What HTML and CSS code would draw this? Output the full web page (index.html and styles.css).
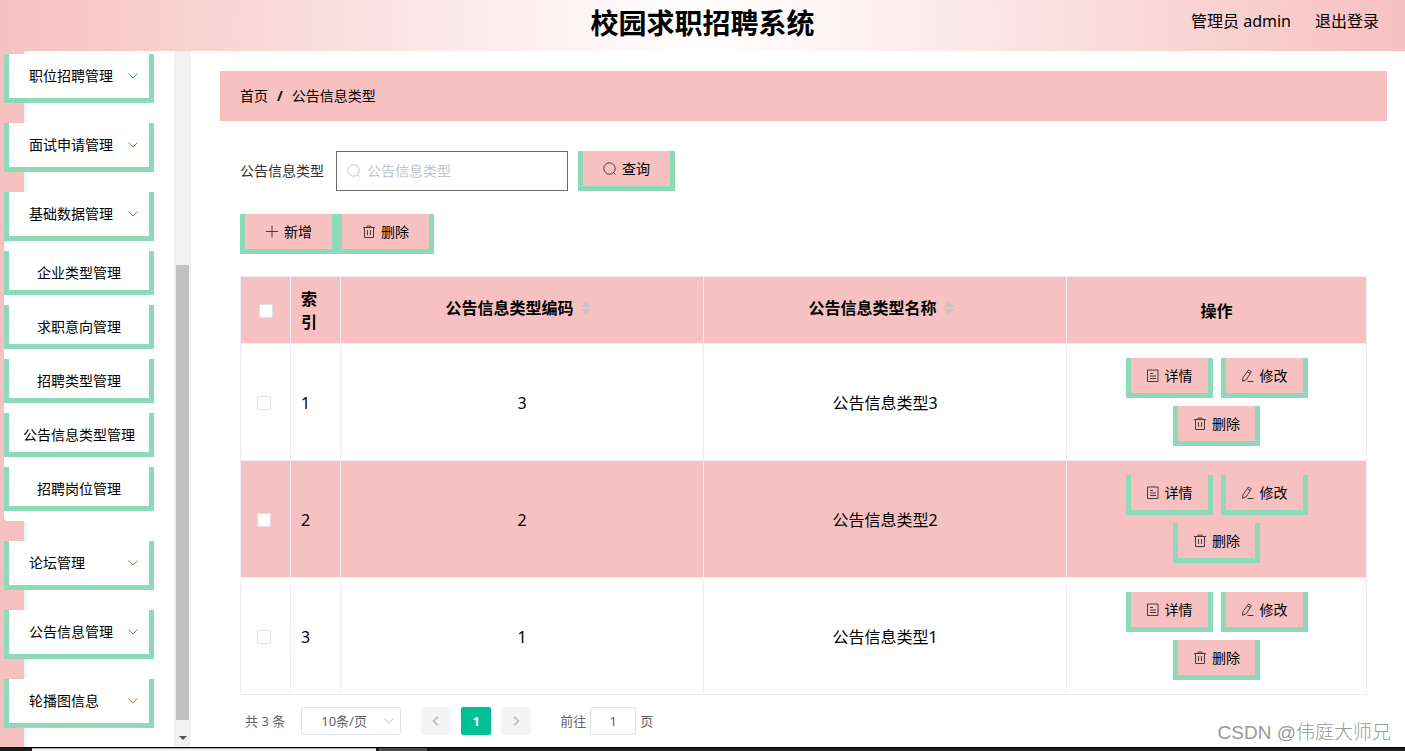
FILE: index.html
```html
<!DOCTYPE html>
<html lang="zh-CN">
<head>
<meta charset="utf-8">
<title>校园求职招聘系统</title>
<link rel="stylesheet" href="styles.css">
</head>
<body>
<svg class="sprite" aria-hidden="true">
  <symbol id="down" viewBox="0 0 12 12"><path d="M1.5 3.5 6 8l4.500-4.500"/></symbol>
  <symbol id="left" viewBox="0 0 12 12"><path d="M8 1.500 3.500 6 8 10.500"/></symbol>
  <symbol id="right" viewBox="0 0 12 12"><path d="M4 1.500 8.500 6 4 10.500"/></symbol>
  <symbol id="search" viewBox="0 0 14 14"><circle cx="6.500" cy="6.500" r="5.700"/><path d="m10.500 10.700 2 1.800"/></symbol>
  <symbol id="plus" viewBox="0 0 14 14"><path d="M1 6.500h12M7 .500v12"/></symbol>
  <symbol id="trash" viewBox="0 0 14 14"><path d="M1 2.500h12M5 2.500v-1.500h4v1.500M2.500 2.500v10h9v-10M5.500 5v5M8.500 5v5"/></symbol>
  <symbol id="doc" viewBox="0 0 14 14"><path d="M1.500 1h10.500v11.500h-10.500zM4 4.500h3M4 7h6M4 9.500h6"/></symbol>
  <symbol id="edit" viewBox="0 0 14 14"><path d="M7.500 1 10.300 2.800 5.200 10.800 1.500 12.300l.500-3.700zM6.500 2.800l2.700 1.700M6.500 12.500h6"/></symbol>
</svg>
<div class="app">
  <header class="header">
    <h1>校园求职招聘系统</h1>
    <div class="user"><span>管理员 admin</span><a href="#">退出登录</a></div>
  </header>
  <div class="body">
    <aside class="aside">
      <nav class="menu">
        <button class="item">职位招聘管理<svg><use href="#down"/></svg></button>
        <button class="item alt">面试申请管理<svg><use href="#down"/></svg></button>
        <div class="group">
          <button class="item">基础数据管理<svg><use href="#down"/></svg></button>
          <div class="submenu">
            <a href="#">企业类型管理</a>
            <a href="#">求职意向管理</a>
            <a href="#">招聘类型管理</a>
            <a href="#">公告信息类型管理</a>
            <a href="#">招聘岗位管理</a>
          </div>
        </div>
        <button class="item alt">论坛管理<svg><use href="#down"/></svg></button>
        <button class="item">公告信息管理<svg><use href="#down"/></svg></button>
        <button class="item alt">轮播图信息<svg><use href="#down"/></svg></button>
      </nav>
      <div class="scrollbar"><div class="thumb"></div><div class="arrow"></div></div>
    </aside>
    <main class="main">
      <div class="crumbs"><a href="#">首页</a><b>/</b><span>公告信息类型</span></div>
      <div class="content">
        <form class="search">
          <label for="type">公告信息类型</label>
          <div class="field"><svg><use href="#search"/></svg><input id="type" type="text" placeholder="公告信息类型"></div>
          <button class="btn wide" type="button"><svg><use href="#search"/></svg>查询</button>
        </form>
        <div class="tools">
          <button class="btn wide"><svg><use href="#plus"/></svg>新增</button>
          <button class="btn wide"><svg><use href="#trash"/></svg>删除</button>
        </div>
        <table class="table">
          <colgroup><col class="narrow"><col class="narrow"><col><col><col class="ops-col"></colgroup>
          <thead>
            <tr>
              <th class="check"><input type="checkbox" aria-label="全选"></th>
              <th class="index">索引</th>
              <th><div class="sortable">公告信息类型编码<i class="sort"></i></div></th>
              <th><div class="sortable">公告信息类型名称<i class="sort"></i></div></th>
              <th>操作</th>
            </tr>
          </thead>
          <tbody>
            <tr>
              <td class="check"><input type="checkbox" aria-label="选择 1"></td><td class="index">1</td><td>3</td><td>公告信息类型3</td>
              <td class="actions"><div class="ops"><button class="btn"><svg><use href="#doc"/></svg>详情</button><button class="btn"><svg><use href="#edit"/></svg>修改</button><button class="btn"><svg><use href="#trash"/></svg>删除</button></div></td>
            </tr>
            <tr class="striped">
              <td class="check"><input type="checkbox" aria-label="选择 2"></td><td class="index">2</td><td>2</td><td>公告信息类型2</td>
              <td class="actions"><div class="ops"><button class="btn"><svg><use href="#doc"/></svg>详情</button><button class="btn"><svg><use href="#edit"/></svg>修改</button><button class="btn"><svg><use href="#trash"/></svg>删除</button></div></td>
            </tr>
            <tr>
              <td class="check"><input type="checkbox" aria-label="选择 3"></td><td class="index">3</td><td>1</td><td>公告信息类型1</td>
              <td class="actions"><div class="ops"><button class="btn"><svg><use href="#doc"/></svg>详情</button><button class="btn"><svg><use href="#edit"/></svg>修改</button><button class="btn"><svg><use href="#trash"/></svg>删除</button></div></td>
            </tr>
          </tbody>
        </table>
        <div class="pagination">
          <span>共 3 条</span>
          <div class="size"><select aria-label="每页条数"><option>10条/页</option></select><svg><use href="#down"/></svg></div>
          <div class="pages">
            <button aria-label="上一页" disabled><svg><use href="#left"/></svg></button>
            <button class="current">1</button>
            <button aria-label="下一页" disabled><svg><use href="#right"/></svg></button>
          </div>
          <div class="jump"><label for="page">前往</label><input id="page" type="text" value="1"><span>页</span></div>
        </div>
      </div>
    </main>
  </div>
  <footer class="taskbar"><div class="window"></div><div class="tab"></div></footer>
  <div class="watermark">CSDN @伟庭大师兄</div>
</div>
</body>
</html>
```
FILE: styles.css
```css
:root {
  --pink: #f7c1c1;
  --green: #8cdab8;
  --line: #ebeef5;
}
* { box-sizing: border-box; }
body {
  margin: 0;
  background: #fff;
  color: #000;
  font: 14px/20px "Noto Sans", "Noto Sans CJK SC", sans-serif;
}
button, input, select { font: inherit; color: inherit; margin: 0; }
a { color: inherit; text-decoration: none; }
svg { fill: none; stroke: currentColor; flex: none; }
.sprite { position: absolute; width: 0; height: 0; }
.app {
  position: relative;
  display: flex;
  flex-direction: column;
  height: 100vh;
  overflow: hidden;
}
.header {
  flex: none;
  display: grid;
  grid-template-columns: 1fr auto 1fr;
  align-items: center;
  height: 51px;
  padding: 0 26px 6px;
  background: radial-gradient(circle, #fff, var(--pink));
}
.header h1 { grid-column: 2; margin: 0; font-size: 28px; line-height: 40px; }
.user {
  display: flex;
  justify-content: flex-end;
  gap: 24px;
  padding-bottom: 4px;
  font-size: 16px;
}
.body { flex: 1; min-height: 0; display: flex; }

/* Sidebar */
.aside { flex: none; display: flex; width: 191px; overflow: hidden; }
.menu {
  flex: 1;
  display: flex;
  flex-direction: column;
  gap: 20px;
  padding: 3px 20px 0 4px;
  background: linear-gradient(90deg, var(--pink) 24px, #e3f3ff 24px, #fff 29px);
}
.item {
  flex: none;
  display: flex;
  align-items: center;
  justify-content: space-between;
  width: 100%;
  height: 49px;
  padding: 0 10px 0 20px;
  border: solid var(--green);
  border-width: 0 5px 5px;
  background: #fff;
}
.item svg { width: 12px; height: 12px; color: #4a90c0; }
.item.alt svg { color: #b07840; }
.submenu {
  display: flex;
  flex-direction: column;
  gap: 10px;
  padding: 10px 0;
  border-radius: 4px;
  background: #fff;
}
.submenu a {
  height: 44px;
  border: solid var(--green);
  border-width: 0 5px 5px;
  line-height: 44px;
  text-align: center;
}
.scrollbar {
  display: flex;
  flex-direction: column;
  align-items: center;
  justify-content: flex-end;
  width: 17px;
  padding-bottom: 7px;
  background: #f1f1f1;
}
.thumb { width: 13px; height: 66%; margin-bottom: 16px; background: #c1c1c1; }
.arrow { border: 4px solid transparent; border-top-color: #505050; border-bottom: 0; }

/* Content */
.main { flex: 1; min-width: 0; padding: 20px 18px 0 29px; }
.crumbs {
  display: flex;
  align-items: center;
  gap: 9px;
  height: 50px;
  padding: 0 20px;
  background: var(--pink);
}
.content { padding: 30px 20px 0; }
.search { display: flex; align-items: center; }
.search label { margin-right: 12px; color: #303133; }
.field {
  display: flex;
  align-items: center;
  gap: 6px;
  width: 232px;
  height: 40px;
  margin-right: 10px;
  padding-left: 10px;
  border: 1px solid #6b6b6b;
  color: #c0c4cc;
}
.field svg { width: 14px; height: 14px; }
.field input { flex: 1; min-width: 0; height: 38px; padding: 0 0 2px; border: 0; outline: 0; background: none; color: #303133; }
.field input::placeholder { color: #c0c4cc; opacity: 1; }
.btn {
  display: flex;
  align-items: center;
  justify-content: center;
  gap: 5px;
  width: 87px;
  height: 40px;
  padding: 0;
  border: solid var(--green);
  border-width: 0 5px 5px;
  background: var(--pink);
}
.btn.wide { width: 97px; }
.btn svg { width: 14px; height: 14px; color: #4a3a3c; }
.tools { display: flex; padding: 23px 0 22px; }

/* Table */
.table {
  width: 100%;
  table-layout: fixed;
  border-collapse: collapse;
  font-size: 16px;
  line-height: 23px;
}
.table th, .table td { border: 1px solid var(--line); padding: 2px 10px 0; text-align: center; }
.table th { height: 67px; }
.table td { height: 117px; }
.table td.actions { padding-top: 0; }
.table thead, .striped { background: var(--pink); }
.narrow { width: 50px; }
.ops-col { width: 300px; }
.table .index { text-align: left; }
.table td.check { padding: 2px 13px 0 10px; }
.table .check input {
  display: block;
  appearance: none;
  width: 14px;
  height: 14px;
  margin: 0 auto;
  border: 1px solid #dcdfe6;
  border-radius: 2px;
  background: #fff;
}
.sortable { display: flex; justify-content: center; align-items: center; gap: 7px; padding: 0 8px 6px 0; }
.sort { display: grid; gap: 2px; }
.sort::before, .sort::after { content: ""; border: 5px solid transparent; }
.sort::before { border-top: 0; border-bottom-color: #c0c4cc; }
.sort::after { border-bottom: 0; border-top-color: #c0c4cc; }
.ops {
  display: flex;
  flex-wrap: wrap;
  justify-content: center;
  gap: 8px;
  padding: 0 45px;
  font-size: 14px;
  line-height: 20px;
}

/* Pagination */
.pagination {
  display: flex;
  align-items: center;
  padding: 12px 5px 0;
  color: #606266;
  font-size: 13px;
}
.size { position: relative; margin: 0 20px 0 16px; }
.size select {
  display: block;
  appearance: none;
  width: 100px;
  height: 28px;
  padding: 0 19px;
  border: 1px solid #dcdfe6;
  border-radius: 3px;
  background: #fff;
}
.size svg { position: absolute; top: 8px; right: 6px; width: 12px; height: 12px; color: #c0c4cc; pointer-events: none; }
.pages { display: flex; gap: 10px; margin-right: 29px; }
.pages button {
  display: grid;
  place-items: center;
  width: 30px;
  height: 28px;
  padding: 0;
  border: 0;
  border-radius: 2px;
  background: #f4f4f5;
  color: #c0c4cc;
}
.pages svg { width: 12px; height: 12px; stroke-width: 2; }
.pages .current { background: #02c095; color: #fff; font-weight: 700; }
.jump { display: flex; align-items: center; gap: 4px; }
.jump input {
  width: 46px;
  height: 28px;
  padding: 0;
  border: 1px solid #dcdfe6;
  border-radius: 3px;
  text-align: center;
}

.taskbar { flex: none; display: flex; gap: 3px; height: 4px; padding-left: 32px; border-top: 1px solid #000; background: #1c1c1c; }
.window { width: 344px; border-top: 1px solid #aaa; background: #f4f4f2; }
.tab { width: 48px; background: #484848; }
.watermark {
  position: absolute;
  right: 14px;
  bottom: 4px;
  color: #999;
  font-family: "Liberation Sans", "Noto Sans CJK SC", sans-serif;
  font-size: 19px;
  font-weight: 300;
  line-height: 28px;
}
```
